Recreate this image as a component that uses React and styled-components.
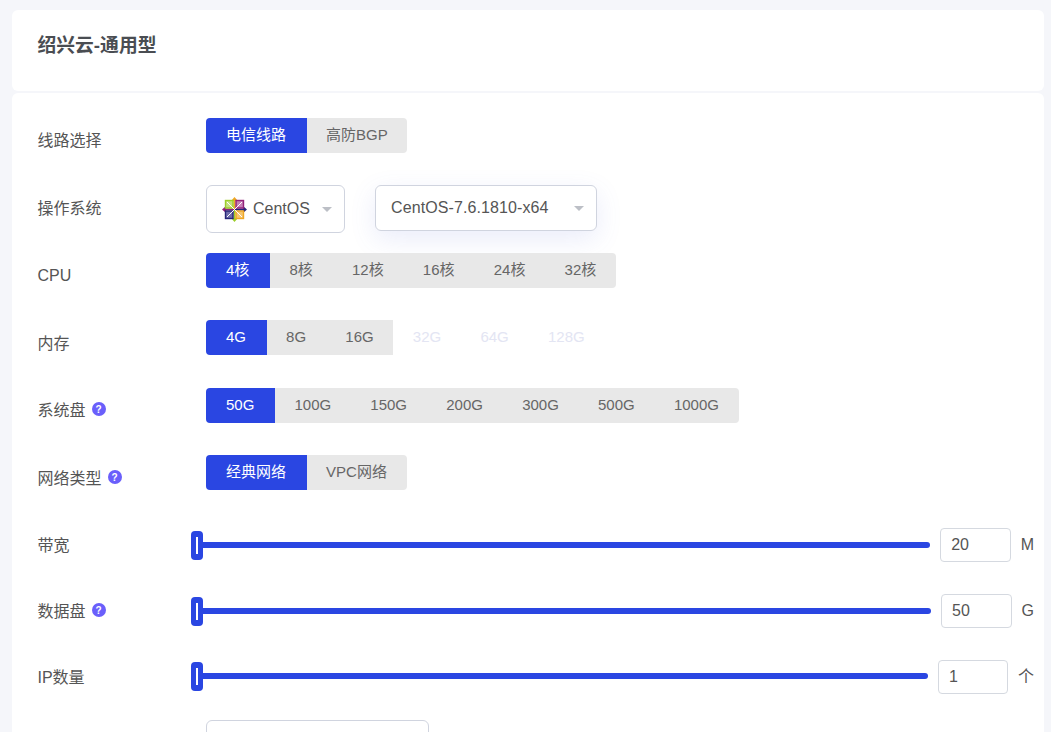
import React from "react";
import styled, { createGlobalStyle } from "styled-components";

const GlobalStyle = createGlobalStyle`
  html, body {
    margin: 0;
    height: 100%;
    overflow: hidden;
    background: #f5f6fa;
    font-family: "Liberation Sans", "Noto Sans CJK SC", sans-serif;
  }
`;

const Page = styled.div`
  padding: 10px 7px 0 12px;
`;

const Card = styled.div`
  background: #fff;
  border-radius: 6px;
  & + & {
    margin-top: 2px;
  }
`;

const Header = styled(Card)`
  height: 81px;
  box-sizing: border-box;
  padding: 24px 26px 0;
`;

const Title = styled.h1`
  margin: 0 0 0 -0.5px;
  font-size: 18.8px;
  line-height: 24px;
  font-weight: 700;
  color: #4a4d52;
`;

const Form = styled(Card)`
  padding: 25px 10px 0 26px;
`;

const Row = styled.div`
  display: flex;
  align-items: flex-start;
  height: ${p => p.$h}px;
`;

const Label = styled.div`
  display: flex;
  align-items: center;
  flex: 0 0 168px;
  margin-top: ${p => p.$top ?? 11}px;
  height: 22px;
  font-size: 16px;
  color: #555;
  text-indent: -0.5px;
`;

const Help = styled.span`
  display: inline-flex;
  align-items: center;
  justify-content: center;
  width: 14px;
  height: 14px;
  margin-left: 6px;
  border-radius: 50%;
  background: #6a5ffb;
  color: #fff;
  font-size: 10px;
  font-weight: 700;
  text-indent: 0;
`;

const Group = styled.div`
  display: flex;
`;

const Option = styled.div`
  padding: 0 19.6px;
  height: 35px;
  line-height: 33px;
  font-size: 15px;
  white-space: nowrap;
  color: ${p => (p.$active ? "#fff" : p.$off ? "#e3e5f3" : "#666")};
  background: ${p => (p.$active ? "#2a46e2" : p.$off ? "transparent" : "#e8e8e8")};
  &:first-child {
    padding: 0 20.5px 0 20px;
    border-radius: 4px 0 0 4px;
  }
  &:last-child {
    border-radius: ${p => (p.$off ? "0" : "0 4px 4px 0")};
  }
`;

const Selects = styled.div`
  display: flex;
  align-items: flex-start;
  gap: 30px;
`;

const Select = styled.div`
  display: flex;
  align-items: center;
  box-sizing: border-box;
  width: ${p => p.$w}px;
  height: ${p => p.$h}px;
  padding: 0 12px 0 15px;
  background: #fff;
  border: 1px solid #d0d4df;
  border-radius: 6px;
  font-size: 16px;
  color: #555;
  ${p => p.$raised && "box-shadow: 0 8px 26px rgba(90, 110, 220, 0.13);"}
`;

const SelectText = styled.span`
  flex: 1;
  white-space: nowrap;
  letter-spacing: ${p => (p.$wide ? "0.1px" : "0")};
`;

const Caret = styled.i`
  width: 0;
  height: 0;
  border-left: 5px solid transparent;
  border-right: 5px solid transparent;
  border-top: 5px solid #bcbfc6;
`;

const Logo = styled.svg`
  width: 25px;
  height: 25px;
  margin-right: 6px;
  flex: none;
`;

const Slider = styled.div`
  position: relative;
  flex: 1;
  height: 6px;
  margin: ${p => p.$top}px 0 0 -15px;
  border-radius: 3px;
  background: #2a46e2;
`;

const Handle = styled.div`
  position: absolute;
  left: 0;
  top: -11px;
  width: 12px;
  height: 28.5px;
  border-radius: 4px;
  background: #2a46e2;
  &::after {
    content: "";
    position: absolute;
    left: 5px;
    top: 6px;
    width: 2px;
    height: 17px;
    background: #fff;
  }
`;

const Amount = styled.input`
  box-sizing: border-box;
  width: ${p => p.$w}px;
  height: 34px;
  margin: 5px 0 0 10px;
  padding: 0 10px;
  border: 1px solid #d5d9e0;
  border-radius: 4px;
  outline: none;
  font: inherit;
  font-size: 16px;
  color: #555;
`;

const Unit = styled.span`
  margin: 5px 0 0 10px;
  line-height: 34px;
  font-size: 16px;
  color: #555;
`;

const CentOSLogo = () => (
  <Logo viewBox="0 0 25 25">
    <path d="M12.5 0l3.5 4h-2.5v8h-2V4H9z" fill="#efa724" />
    <path d="M25 12.5l-4 3.5v-2.5h-8v-2h8V9z" fill="#262577" />
    <path d="M12.5 25L9 21h2.5v-8h2v8H16z" fill="#9ccd2a" />
    <path d="M0 12.5L4 9v2.5h8v2H4V16z" fill="#932279" />
    <rect x="3.5" y="3.5" width="7.5" height="7.5" fill="#c5e07f" stroke="#9ccd2a" strokeWidth="1.4" />
    <rect x="14" y="3.5" width="7.5" height="7.5" fill="#c57fb5" stroke="#932279" strokeWidth="1.4" />
    <rect x="3.5" y="14" width="7.5" height="7.5" fill="#6f6eab" stroke="#262577" strokeWidth="1.4" />
    <rect x="14" y="14" width="7.5" height="7.5" fill="#f5c56f" stroke="#efa724" strokeWidth="1.4" />
    <path d="M5 5l15 15M20 5L5 20" stroke="#fff" strokeWidth="1" />
  </Logo>
);

const OptionRow = ({ h, top, label, help, options, disabled = [] }) => (
  <Row $h={h}>
    <Label $top={top}>
      {label}
      {help && <Help>?</Help>}
    </Label>
    <Group>
      {options.map((o, i) => (
        <Option key={o} $active={i === 0}>
          {o}
        </Option>
      ))}
      {disabled.map(o => (
        <Option key={o} $off>
          {o}
        </Option>
      ))}
    </Group>
  </Row>
);

const SliderRow = ({ h, track, label, help, value, unit, width = 70.5 }) => (
  <Row $h={h}>
    <Label $top={10}>
      {label}
      {help && <Help>?</Help>}
    </Label>
    <Slider $top={track}>
      <Handle />
    </Slider>
    <Amount $w={width} defaultValue={value} />
    <Unit>{unit}</Unit>
  </Row>
);

export default function App() {
  return (
    <>
      <GlobalStyle />
      <Page>
        <Header>
          <Title>绍兴云-通用型</Title>
        </Header>
        <Form>
          <OptionRow h={67} top={10} label="线路选择" options={["电信线路", "高防BGP"]} />
          <Row $h={68}>
            <Label>操作系统</Label>
            <Selects>
              <Select $w={139} $h={48}>
                <CentOSLogo />
                <SelectText>CentOS</SelectText>
                <Caret />
              </Select>
              <Select $w={222} $h={46} $raised>
                <SelectText $wide>CentOS-7.6.1810-x64</SelectText>
                <Caret />
              </Select>
            </Selects>
          </Row>
          <OptionRow h={67} top={12} label="CPU" options={["4核", "8核", "12核", "16核", "24核", "32核"]} />
          <OptionRow h={68} label="内存" options={["4G", "8G", "16G"]} disabled={["32G", "64G", "128G"]} />
          <OptionRow
            h={67}
            top={10}
            label="系统盘"
            help
            options={["50G", "100G", "150G", "200G", "300G", "500G", "1000G"]}
          />
          <OptionRow h={68} label="网络类型" help options={["经典网络", "VPC网络"]} />
          <SliderRow h={66} track={19} label="带宽" value="20" unit="M" />
          <SliderRow h={66} track={19} label="数据盘" help value="50" unit="G" />
          <SliderRow h={65} track={18} width={70} label="IP数量" value="1" unit="个" />
          <Row $h={60}>
            <Label />
            <Select $w={223} $h={46} />
          </Row>
        </Form>
      </Page>
    </>
  );
}
